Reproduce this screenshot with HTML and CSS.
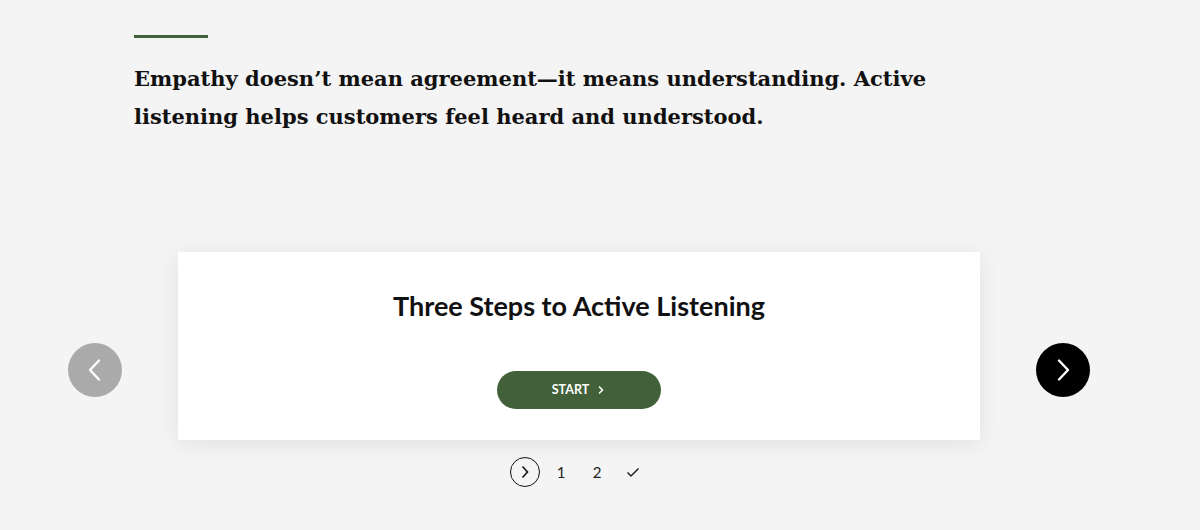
FILE: index.html
```html
<!DOCTYPE html>
<html lang="en">
<head>
  <meta charset="UTF-8" />
  <meta name="viewport" content="width=device-width, initial-scale=1" />
  <title>Active Listening</title>
  <link rel="stylesheet" href="styles.css">
</head>
<body>

  <section class="intro">
    <div class="rule"></div>
    <p class="quote">Empathy doesn’t mean agreement—it means understanding. Active listening helps customers feel heard and understood.</p>
  </section>

  <section class="carousel">
    <button class="nav-btn prev" aria-label="Previous">
      <svg width="24" height="24" viewBox="0 0 24 24"><path d="M16 2.5l-9 9.5 9 9.5" fill="none" stroke="#fff" stroke-width="2.4" stroke-linecap="round" stroke-linejoin="round"/></svg>
    </button>

    <div class="slide">
      <div class="card">
        <h2>Three Steps to Active Listening</h2>
        <button class="start-btn">START
          <svg width="10" height="10" viewBox="0 0 10 10"><path d="M3 1.5l3.5 3.5L3 8.5" fill="none" stroke="#fff" stroke-width="1.5"/></svg>
        </button>
      </div>

      <nav class="steps">
        <span class="step">
          <span class="step-current">
            <svg width="12" height="16" viewBox="0 0 12 16"><path d="M3.5 2.5l5 5.5-5 5.5" fill="none" stroke="#111" stroke-width="1.6"/></svg>
          </span>
        </span>
        <span class="step">1</span>
        <span class="step">2</span>
        <span class="step">
          <svg width="14" height="12" viewBox="0 0 14 12"><path d="M1.5 6.5l3.5 3.5L12.5 2.5" fill="none" stroke="#222" stroke-width="1.5"/></svg>
        </span>
      </nav>
    </div>

    <button class="nav-btn next" aria-label="Next">
      <svg width="24" height="24" viewBox="0 0 24 24"><path d="M8 2.5l9 9.5-9 9.5" fill="none" stroke="#fff" stroke-width="2.4" stroke-linecap="round" stroke-linejoin="round"/></svg>
    </button>
  </section>

</body>
</html>
```

FILE: styles.css
```css
body {
  margin: 0;
  padding: 0;
  background: #f4f4f4;
  color: #111;
  font-family: 'Lato', sans-serif;
}
.intro {
  padding: 35px 0 0 134px;
  width: 800px;
}
.rule {
  width: 74px;
  height: 3px;
  background: #42613a;
}
.quote {
  font-family: 'DejaVu Serif', serif;
  font-weight: bold;
  font-size: 21px;
  line-height: 38px;
  margin: 22px 0 0;
  color: #111;
}
.carousel {
  display: flex;
  align-items: center;
  gap: 56px;
  padding-left: 68px;
  margin-top: 116px;
}
.nav-btn {
  width: 54px;
  height: 54px;
  border-radius: 50%;
  border: none;
  display: flex;
  align-items: center;
  justify-content: center;
  padding: 0;
  cursor: pointer;
}
.prev {
  background: #aaaaaa;
}
.next {
  background: #000;
}
.slide {
  display: flex;
  flex-direction: column;
  align-items: center;
}
.card {
  width: 802px;
  height: 188px;
  box-sizing: border-box;
  background: #fff;
  box-shadow: 0 4px 22px rgba(0,0,0,0.08);
  display: flex;
  flex-direction: column;
  align-items: center;
  padding-top: 38px;
}
.card h2 {
  margin: 0;
  font-size: 27px;
  font-weight: bold;
  line-height: 32px;
  color: #111;
}
.start-btn {
  margin-top: 49px;
  width: 164px;
  height: 38px;
  border: none;
  border-radius: 19px;
  background: #42613a;
  color: #fff;
  font-family: 'Lato', sans-serif;
  font-weight: bold;
  font-size: 12.5px;
  padding-bottom: 2px;
  display: flex;
  align-items: center;
  justify-content: center;
  gap: 7px;
  cursor: pointer;
}
.steps {
  display: flex;
  align-items: center;
  margin-top: 17px;
  font-size: 15px;
  color: #222;
}
.step {
  width: 36px;
  height: 30px;
  display: flex;
  align-items: center;
  justify-content: center;
}
.step-current {
  width: 30px;
  height: 30px;
  box-sizing: border-box;
  border: 1.5px solid #111;
  border-radius: 50%;
  display: flex;
  align-items: center;
  justify-content: center;
  flex-shrink: 0;
}
```
